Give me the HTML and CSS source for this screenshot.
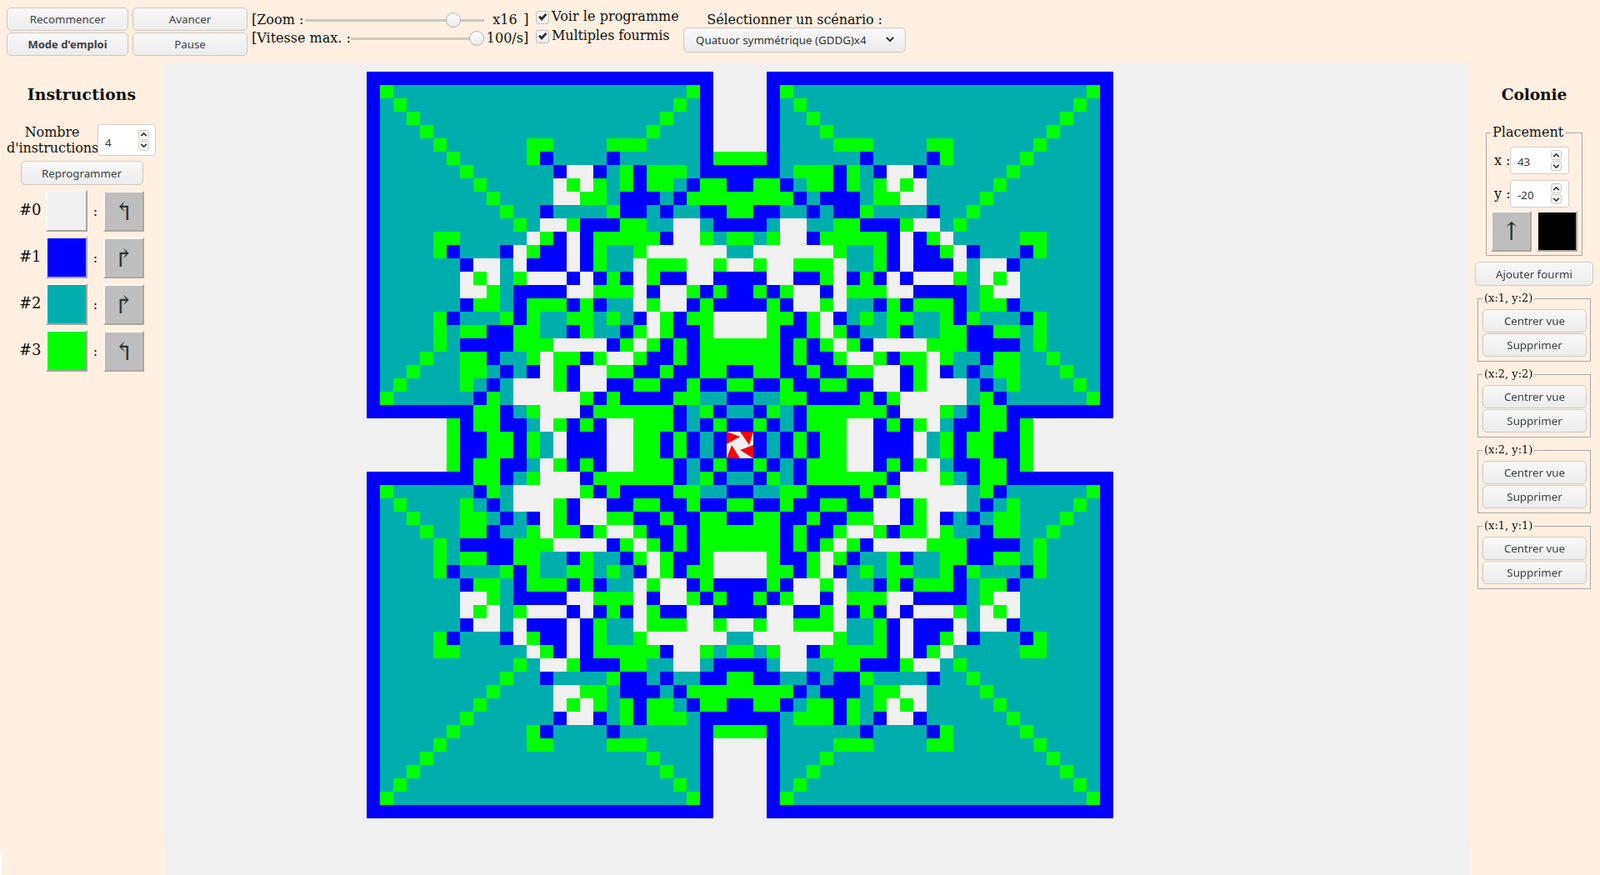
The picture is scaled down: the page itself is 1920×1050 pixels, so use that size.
FILE: index.html
```html
<!DOCTYPE html>
<html lang="fr">
<head>
<meta charset="utf-8">
<title>Fourmi de Langton</title>
<link rel="stylesheet" href="styles.css">
</head>
<body>
<svg class="defs" width="0" height="0" aria-hidden="true">
  <symbol id="up" viewBox="0 0 10 10"><path d="M2 6.5 5 3.5 8 6.5" fill="none" stroke="#33383a" stroke-width="1.5"/></symbol>
  <symbol id="down" viewBox="0 0 10 10"><path d="M2 3.5 5 6.5 8 3.5" fill="none" stroke="#33383a" stroke-width="1.5"/></symbol>
</svg>
<header class="toolbar">
  <div class="actions">
    <button class="btn">Recommencer</button>
    <button class="btn">Avancer</button>
    <button class="btn strong">Mode d'emploi</button>
    <button class="btn">Pause</button>
  </div>
  <div class="sliders">
    <label class="slider-row"><span>[Zoom :</span><input class="range zoom" type="range" min="0" max="100" step="0.5" value="85.5"><span class="zoom-val">x16</span><span class="bracket">]</span></label>
    <label class="slider-row"><span>[Vitesse max. :</span><input class="range speed" type="range" min="0" max="100" value="100"><span class="speed-val">100/s]</span></label>
  </div>
  <div class="checks">
    <label class="check"><input type="checkbox" checked><span>Voir le programme</span></label>
    <label class="check multi"><input type="checkbox" checked><span>Multiples fourmis</span></label>
  </div>
  <div class="scenario">
    <label class="scenario-label" for="scn">Sélectionner un scénario :</label>
    <div class="select-wrap">
      <select id="scn" class="select"><option>Quatuor symmétrique (GDDG)x4</option></select>
      <svg class="chevron" width="14" height="14"><use href="#down"/></svg>
    </div>
  </div>
</header>

<main class="main">
  <aside class="left">
    <h2 class="title title-instr">Instructions</h2>
    <div class="count">
      <label class="count-label">Nombre d'instructions</label>
      <div class="num count-num"><input type="text" value="4"><span class="spin"><i><svg width="11" height="11"><use href="#up"/></svg></i><i><svg width="11" height="11"><use href="#down"/></svg></i></span></div>
    </div>
    <button class="btn reprog">Reprogrammer</button>
    <div class="instr">
      <span class="idx">#0</span><button class="square c0"></button><span class="colon">:</span><button class="square dir">↰</button>
    </div>
    <div class="instr">
      <span class="idx">#1</span><button class="square c1"></button><span class="colon">:</span><button class="square dir">↱</button>
    </div>
    <div class="instr">
      <span class="idx">#2</span><button class="square c2"></button><span class="colon">:</span><button class="square dir">↱</button>
    </div>
    <div class="instr">
      <span class="idx">#3</span><button class="square c3"></button><span class="colon">:</span><button class="square dir">↰</button>
    </div>
  </aside>

  <canvas id="board" class="board" width="1566" height="939"></canvas>

  <aside class="right">
    <h2 class="title title-col">Colonie</h2>
    <fieldset class="placement">
      <legend>Placement</legend>
      <div class="coord"><label>x :</label><div class="num"><input type="text" value="43"><span class="spin"><i><svg width="11" height="11"><use href="#up"/></svg></i><i><svg width="11" height="11"><use href="#down"/></svg></i></span></div></div>
      <div class="coord"><label>y :</label><div class="num"><input type="text" value="-20"><span class="spin"><i><svg width="11" height="11"><use href="#up"/></svg></i><i><svg width="11" height="11"><use href="#down"/></svg></i></span></div></div>
      <div class="ant-opts"><button class="square dir">↑</button><button class="square black"></button></div>
    </fieldset>
    <button class="btn add">Ajouter fourmi</button>
    <fieldset class="ant"><legend>(x:1, y:2)</legend><button class="btn">Centrer vue</button><button class="btn">Supprimer</button></fieldset>
    <fieldset class="ant"><legend>(x:2, y:2)</legend><button class="btn">Centrer vue</button><button class="btn">Supprimer</button></fieldset>
    <fieldset class="ant"><legend>(x:2, y:1)</legend><button class="btn">Centrer vue</button><button class="btn">Supprimer</button></fieldset>
    <fieldset class="ant"><legend>(x:1, y:1)</legend><button class="btn">Centrer vue</button><button class="btn">Supprimer</button></fieldset>
  </aside>
</main>
<footer class="foot"><div class="foot-side"></div><div class="foot-mid"></div><div class="foot-end"></div><div class="notch"></div></footer>
<script src="script.js"></script>
</body>
</html>
```
FILE: styles.css
```css
* { box-sizing: border-box; }
html, body { margin: 0; height: 1050px; overflow: hidden; }
body { background: #ffefe0; color: #111; font-family: "DejaVu Serif", serif; font-size: 16px; display: flex; flex-direction: column; position: relative; }
.defs { position: absolute; }

.btn {
  font-family: "Noto Sans", sans-serif; font-size: 13.33px; color: #3d4143;
  height: 29px; padding: 0; border: 1px solid #cfc8c2; border-radius: 5px;
  background: linear-gradient(#f7f7f7, #ececec); cursor: default;
}
.strong { font-weight: 700; font-size: 13px; }

.toolbar { height: 75px; flex: none; display: flex; align-items: flex-start; }
.actions { display: grid; grid-template-columns: 146px 138px; grid-auto-rows: 28px; gap: 2px 5px; margin: 9px 0 0 8px; }
.actions .btn { height: 28px; }
.sliders { margin: 13px 0 0 5px; display: flex; flex-direction: column; gap: 0; width: 336px; }
.slider-row { display: flex; align-items: center; height: 22px; line-height: 22px; white-space: nowrap; }
.range { appearance: none; -webkit-appearance: none; margin: 0; height: 18px; background: transparent; }
.range::-webkit-slider-runnable-track { height: 3px; background: #cdc8c3; }
.range::-webkit-slider-thumb { -webkit-appearance: none; width: 18px; height: 18px; margin-top: -8px; border-radius: 50%; border: 1px solid #b8b3ae; background: linear-gradient(#fcfcfc, #ececec); }
.zoom { width: 215px; margin-left: 2px; }
.speed { width: 160px; margin-left: 0; }
.zoom-val { margin-left: 10px; width: 37px; }
.bracket { width: 6px; }
.speed-val { margin-left: 3px; }

.checks { margin: 10px 0 0 5px; display: flex; flex-direction: column; gap: 2px; width: 177px; }
.check { display: flex; align-items: center; height: 21px; gap: 3px; white-space: nowrap; letter-spacing: 0.05px; }
.check span { margin-top: -2px; }
.multi { letter-spacing: -0.12px; }
.multi span { margin-top: -3px; }
.check input { appearance: none; -webkit-appearance: none; margin: 0; width: 16px; height: 16px; border: 1px solid #c6c0ba; border-radius: 3px; background: linear-gradient(#fbfbfb, #ececec); position: relative; }
.check input::before { content: ""; position: absolute; inset: 1px; background: #2c3234; clip-path: polygon(8% 52%, 26% 36%, 42% 52%, 78% 12%, 96% 28%, 42% 88%); }

.scenario { width: 267px; margin-top: 14px; display: flex; flex-direction: column; align-items: center; }
.scenario-label { line-height: 20px; letter-spacing: -0.1px; margin-bottom: -1px; }
.select-wrap { position: relative; width: 267px; }
.select { appearance: none; -webkit-appearance: none; display: block; width: 100%; height: 30px; padding: 0 0 0 14px; font-family: "Noto Sans", sans-serif; font-size: 13.33px; color: #2e3436; border: 1px solid #cfc8c2; border-radius: 5px; background: linear-gradient(#f7f7f7, #ececec); }
.chevron { position: absolute; right: 12px; top: 7px; pointer-events: none; }

.main { display: flex; height: 939px; flex: none; }
.left { width: 196px; flex: none; display: flex; flex-direction: column; align-items: stretch; }
.right { width: 158px; flex: none; display: flex; flex-direction: column; }
.board { display: block; width: 1566px; height: 939px; flex: none; }
.title { margin: 28px 0 0; font-size: 18.72px; line-height: 20px; font-weight: 700; text-align: center; }
.title-instr { letter-spacing: 0.15px; }
.title-col { letter-spacing: -0.15px; }

.count { display: flex; margin: 26px 0 0 8px; }
.count-label { width: 109px; text-align: center; line-height: 19px; letter-spacing: -0.08px; }
.num { display: flex; align-items: center; justify-content: space-between; background: #fff; border: 1px solid #d3cdc8; border-radius: 3px; }
.num input { border: 0; outline: 0; width: 40px; padding: 2px 0 0; margin-left: 8px; font: 13.33px "Noto Sans", sans-serif; color: #2e3436; background: transparent; }
.spin { display: flex; flex-direction: column; gap: 1px; margin-right: 8px; }
.spin i { display: flex; align-items: center; justify-content: center; width: 13px; height: 12px; border: 1px solid #cfc8c2; border-radius: 3px; background: #f8f8f8; }
.count-num { width: 70px; height: 38px; }
.count-num input { padding-top: 6px; }

.reprog { width: 147px; align-self: center; margin-top: 6px; }

.instr { display: flex; align-items: center; height: 50px; margin-top: 6px; padding-left: 23px; }
.idx { width: 32px; font-size: 18px; padding-bottom: 3px; }
.colon { width: 19px; text-align: center; }
.square { width: 50px; height: 50px; padding: 0; border: 2px solid; border-color: #fbf6f1 #a9a5a1 #a9a5a1 #fbf6f1; border-radius: 0; background: #f0f0f0; }
.c0 { background: #f0f0f0; }
.c1 { background: #0000ff; }
.c2 { background: #00aeae; }
.c3 { background: #00ff00; }
.dir { background: #bebebe; font-family: "DejaVu Serif", serif; font-size: 30px; line-height: 40px; color: #2e3436; }
.instr .dir { width: 49px; height: 49px; align-self: flex-end; }
.black { background: #000; }

fieldset { margin: 0; min-width: 0; border: 1px solid #a8a8ae; }
legend { padding: 0 2px; }
.placement { width: 116px; margin: 26px 0 0 21px; padding: 7px 4px 4px 5px; height: 158px; }
.placement legend { font-size: 16px; line-height: 20px; margin-left: 0; }
.coord { display: flex; align-items: center; height: 33px; margin-bottom: 7px; }
.coord + .coord { margin-bottom: 4px; }
.coord label { width: 23px; padding-left: 4px; font-size: 16px; white-space: nowrap; }
.coord .num { width: 71px; height: 33px; }
.ant-opts { display: flex; gap: 6px; }
.ant-opts .square { width: 49px; height: 49px; }
.add { width: 142px; margin: 7px 0 0 8px; }
.ant { width: 136px; margin: 8px 0 0 11px; padding: 6px 4px 0 5px; height: 83px; display: flex; flex-direction: column; }
.ant legend { font-size: 13px; line-height: 14px; margin-left: 0; }
.ant .btn { width: 125px; height: 28px; display: block; margin-bottom: 1px; flex: none; }

.foot { display: flex; flex: 1; }
.foot-side { width: 198px; flex: none; }
.foot-mid { width: 1566px; flex: none; background: #f0f0f0; }
.foot-end { flex: 1; }
.notch { position: absolute; left: 0; top: 1023px; width: 2px; height: 27px; background: #fff; }
```
FILE: script.js
```js
var rows = [
 "B26 .2","B G T22 G B .2","B T G T20 G T B .2","B T2 G T18 G T2 B .2","B T3 G T16 G T3 B .2",
 "B T4 G T6 G2 T4 G3 T4 B .2","B T5 G T5 G B T4 B T6 B G2","B T6 G T6 B .2 B T G B G3 T B3",
 "B T7 G T5 . G . G T G B G2 T B G2 B","B T8 G T4 .2 G2 T B3 T B G4","B T9 G T2 B T4 G B2 T B T2 B2 G",
 "B T10 G T .2 G B3 G2 T2 .2 T B2","B T4 G2 T5 . G B . B G5 B .2 G T G","B T4 G B T3 B . G B2 . B G T2 G .6 T",
 "B T6 B .2 T . B3 . B G T2 . G3 .2 G .","B T6 . G . T G .3 B . B G B . G B2 .2 B2","B T6 .2 G T B4 .2 G3 . B .2 G B G B",
 "B T6 B G2 T B G3 B G B T2 . G .2 B G B2","B T4 G B T3 G B G T2 G2 T G T B . G B G2 .2","B T4 G T G2 B2 G2 T2 B G T2 B G . G B2 G .2",
 "B T4 G T B4 G3 .4 B G . G B G B G3","B T3 G T2 G2 B T2 G . G2 B G .2 G B2 G B G3","B T2 G T3 G2 T B T B . G B .2 G2 B2 G B2 G2 B",
 "B T G T4 G T B T .3 G B .2 B2 G2 B2 G B2 G","B G T6 B G T .5 G B G B4 G2 T2 B","B8 G2 B T G .3 B G6 B T G B T",
 ".6 G B G2 B2 T . G B G B .2 G3 B T B G B",".6 G B2 G2 B G T . B3 .2 G2 B G B T B ."
];
var colors = { ".": "#f0f0f0", B: "#0000ff", T: "#00aeae", G: "#00ff00" };
var ctx = document.getElementById("board").getContext("2d");
var ox = 244, oy = 11, cell = 16, n = 56;
ctx.fillStyle = "#f0f0f0";
ctx.fillRect(0, 0, 1566, 939);
rows.forEach(function (row, r) {
  var c = 0;
  row.split(" ").forEach(function (tok) {
    var len = parseInt(tok.slice(1) || "1", 10), k = tok[0];
    ctx.fillStyle = colors[k];
    for (var i = 0; i < len; i++, c++) {
      [[c, r], [n - 1 - c, r], [c, n - 1 - r], [n - 1 - c, n - 1 - r]].forEach(function (p) {
        ctx.fillRect(ox + p[0] * cell, oy + p[1] * cell, cell, cell);
      });
    }
  });
});
var ax = ox + 27 * cell, ay = oy + 27 * cell;
ctx.fillStyle = "#ff0000";
[[[0, 0], [16, 6], [0, 15]], [[16, 0], [32, 0], [27, 16]], [[32, 16], [32, 32], [16, 22]], [[0, 32], [6, 16], [16, 32]]].forEach(function (t) {
  ctx.beginPath();
  ctx.moveTo(ax + t[0][0], ay + t[0][1]);
  ctx.lineTo(ax + t[1][0], ay + t[1][1]);
  ctx.lineTo(ax + t[2][0], ay + t[2][1]);
  ctx.closePath();
  ctx.fill();
});
```
